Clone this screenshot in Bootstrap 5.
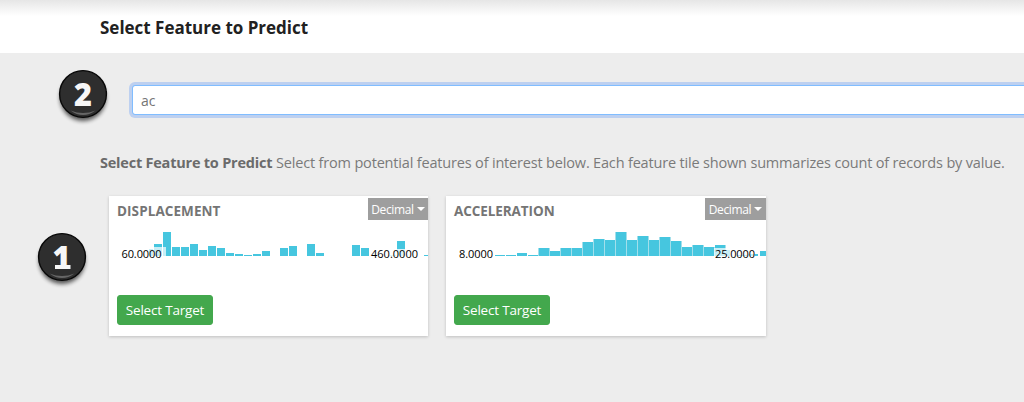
<!DOCTYPE html>
<html lang="en">
<head>
<meta charset="utf-8">
<meta name="viewport" content="width=device-width, initial-scale=1">
<title>Select Feature to Predict</title>
<link href="https://cdn.jsdelivr.net/npm/bootstrap@5.3.0/dist/css/bootstrap.min.css" rel="stylesheet">
<style>
body{background:#ededed;font-family:"Open Sans","Noto Sans",sans-serif;color:#6b6b6b;height:402px;overflow:hidden}
.page-head{height:53px;padding:3px 0 0 100px;background:linear-gradient(#e6e6e6,#fff 16px)}
.page-head h1{font-size:17px;font-weight:700;color:#212121;letter-spacing:-.01px}
.search-row{height:98px;padding:32px 0 0 132px}
.search-box{width:920px;height:30px;min-height:0;border:1px solid #80bdff;border-radius:3px;padding:0 8px;font-size:14px;color:#757575;box-shadow:0 0 0 3px #bdd0f0}
.search-box:focus{border-color:#80bdff;box-shadow:0 0 0 3px #bdd0f0;color:#757575}
.intro{height:45px;padding-left:100px;font-size:14.5px;line-height:23px;white-space:nowrap}
.intro strong{font-weight:700;letter-spacing:-.22px}
.intro span{letter-spacing:-.175px;color:#7a7a7a}
.tiles{padding-left:109px;gap:18px}
.tile{width:319px;height:140px;border:0;border-radius:0;box-shadow:0 1px 3px rgba(0,0,0,.2);color:#757575}
.tile.wide{width:320px}
.tile-top{height:32px;padding-left:8px}
.tile-top h2{font-size:13.5px;line-height:30px;font-weight:700;letter-spacing:.08px}
.wide .tile-top h2{letter-spacing:-.08px}
.type-btn{width:60px;height:22px;margin-top:2px;border:0;border-radius:0;padding:1px 0 0;background:#9e9e9e!important;color:#fff!important;font-size:12px;line-height:21px;letter-spacing:-.35px}
.wide .type-btn{width:61px}
.type-btn::after{margin-left:3px;vertical-align:3px;border-width:4px 4px 0}
.chart text{font:11px "Open Sans",sans-serif;fill:#000}
.target-btn{width:96px;height:30px;margin:7px 0 0 8px;padding:0;background:#43a84d;border-color:#43a84d;border-radius:3px;font-size:13.5px;line-height:29px;letter-spacing:-.2px}
.step{position:absolute;width:60px;height:64px}
.step text{font:800 31px "Open Sans",sans-serif;fill:#f7f7f7}
.step-two{left:53px;top:66px}
.step-one{left:32px;top:229px}
</style>
</head>
<body>
<header class="page-head d-flex align-items-center"><h1 class="m-0">Select Feature to Predict</h1></header>
<main>
<div class="search-row"><input class="form-control search-box" value="ac" aria-label="Search features"></div>
<p class="intro m-0"><strong>Select Feature to Predict</strong> <span>Select from potential features of interest below. Each feature tile shown summarizes count of records by value.</span></p>
<div class="tiles d-flex">
<section class="card tile">
<div class="tile-top d-flex justify-content-between"><h2 class="m-0">DISPLACEMENT</h2><button class="btn type-btn dropdown-toggle">Decimal</button></div>
<svg class="chart" width="319" height="60" viewBox="109 228 319 60">
<path fill="#46c6df" d="M149 256v-7h4v7zM154 256v-12h8v12zM163 256v-24h8v24zM172 256v-9h8v9zM181 256v-9h8v9zM190 256v-12h8v12zM199 256v-6h8v6zM208 256v-10h8v10zM217 256v-8h8v8zM226 256v-3h8v3zM235 256v-2h8v2zM244 256v-1h8v1zM253 256v-2h8v2zM262 256v-5h8v5zM280 256v-8h8v8zM289 256v-10h8v10zM307 256v-12h8v12zM316 256v-3h8v3zM352 256v-11h8v11zM361 256v-8h8v8zM388 256v-1h8v1zM397 256v-15h8v15zM424 256v-1h4v1z"/>
<path fill="#fff" fill-opacity=".7" d="M120 247h46v14h-46z"/><path fill="#fff" fill-opacity=".8" d="M370 249h49v12h-49z"/>
<text x="121.500" y="258" textLength="40">60.0000</text><text x="371" y="258" textLength="47">460.0000</text>
</svg>
<button class="btn btn-success target-btn">Select Target</button>
</section>
<section class="card tile wide">
<div class="tile-top d-flex justify-content-between"><h2 class="m-0">ACCELERATION</h2><button class="btn type-btn dropdown-toggle">Decimal</button></div>
<svg class="chart" width="320" height="60" viewBox="446 228 320 60">
<path fill="#a3dfeb" d="M538 256v-8h1v8zM549 256v-8h1v8zM560 256v-8h1v8zM571 256v-8h1v8zM582 256v-14h1v14zM593 256v-17h1v17zM604 256v-17h1v17zM615 256v-24h1v24zM626 256v-24h1v24zM637 256v-20h1v20zM648 256v-20h1v20zM659 256v-19h1v19zM670 256v-19h1v19zM681 256v-15h1v15zM692 256v-11h1v11zM703 256v-11h1v11zM714 256v-9h1v9zM725 256v-11h1v11z"/>
<path fill="#46c6df" d="M495 256v-1h10v1zM506 256v-1h10v1zM517 256v-3h10v3zM528 256v-1h10v1zM539 256v-8h10v8zM550 256v-5h10v5zM561 256v-8h10v8zM572 256v-8h10v8zM583 256v-14h10v14zM594 256v-17h10v17zM605 256v-16h10v16zM616 256v-24h10v24zM627 256v-16h10v16zM638 256v-20h10v20zM649 256v-16h10v16zM660 256v-19h10v19zM671 256v-15h10v15zM682 256v-9h10v9zM693 256v-11h10v11zM704 256v-9h10v9zM715 256v-11h10v11zM726 256v-6h4v6zM737 256v-1h10v1zM748 256v-2h10v2zM760 256v-5h6v5z"/>
<path fill="#fff" fill-opacity=".7" d="M714 248h41v13h-41z"/>
<text x="459" y="258" textLength="34">8.0000</text><text x="715" y="258" textLength="40">25.0000</text>
</svg>
<button class="btn btn-success target-btn">Select Target</button>
</section>
</div>
</main>
<svg width="0" height="0" class="position-absolute"><defs><filter id="drop" x="-30%" y="-30%" width="160%" height="170%"><feGaussianBlur stdDeviation="2.2"/></filter><symbol id="disc" viewBox="0 0 60 64"><circle cx="30" cy="32" r="23" fill="#000" opacity=".65" filter="url(#drop)"/><circle cx="30" cy="28" r="23.4" fill="#2e2e2e" stroke="#080808" stroke-width="1.4"/><path d="M17.500 44.500q12.500 5 25 0q-12.500 9-25 0z" fill="#666"/></symbol></defs></svg>
<svg class="step step-two"><use href="#disc"/><text x="21" y="40" textLength="18" lengthAdjust="spacingAndGlyphs">2</text></svg>
<svg class="step step-one"><use href="#disc"/><text x="20.500" y="40" textLength="18" lengthAdjust="spacingAndGlyphs">1</text><path d="M23 36h15.500v4H23z" fill="#f7f7f7"/></svg>
<script src="https://cdn.jsdelivr.net/npm/bootstrap@5.3.0/dist/js/bootstrap.bundle.min.js"></script>
</body>
</html>
